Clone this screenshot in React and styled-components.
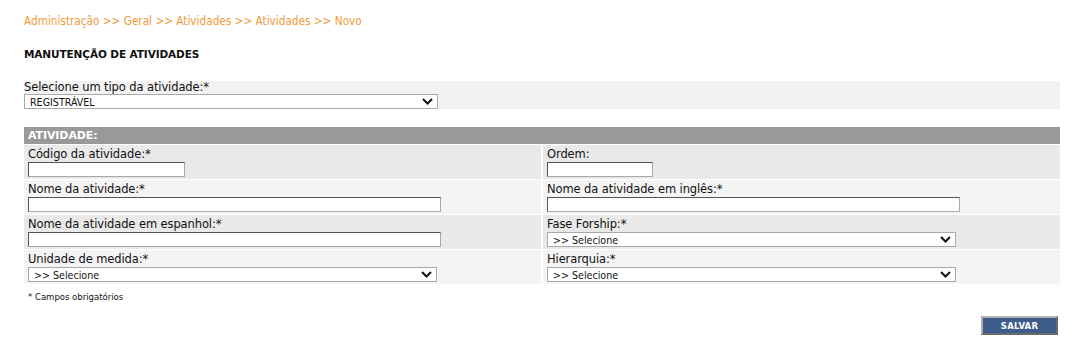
import React from "react";
import styled, { createGlobalStyle } from "styled-components";

const GlobalStyle = createGlobalStyle`
  html, body {
    margin: 0;
    padding: 0;
    background: #ffffff;
    font-family: "DejaVu Sans", Verdana, sans-serif;
    color: #111;
  }
`;

const Page = styled.div`
  width: 1080px;
  height: 348px;
  padding: 13px 20px 0 24px;
  box-sizing: border-box;
`;

const Breadcrumb = styled.div`
  color: #f39a3a;
  font-family: "DejaVu Sans Condensed", "DejaVu Sans", sans-serif;
  font-size: 11.7px;
  line-height: 17px;
`;

const Title = styled.h1`
  margin: 17px 0 0;
  font-size: 10.5px;
  line-height: 14px;
  font-weight: bold;
  letter-spacing: -0.1px;
`;

const TypeBlock = styled.div`
  margin-top: 20px;
  width: 1036px;
  background: #f2f2f2;
`;

const Label = styled.div`
  font-size: 11.5px;
  line-height: 13px;
  letter-spacing: -0.1px;
  color: #111;
`;

const Section = styled.div`
  margin-top: 18px;
  width: 1036px;
  background: #fff;
`;

const SectionHeader = styled.div`
  height: 17px;
  background: #999999;
  color: #fff;
  font-weight: bold;
  font-size: 11px;
  line-height: 17px;
  padding-left: 4px;
  letter-spacing: -0.1px;
`;

const Grid = styled.div`
  display: grid;
  grid-template-columns: 517px 1fr;
  column-gap: 2px;
  row-gap: 1px;
  padding-top: 1px;
`;

const Cell = styled.div`
  background: ${(p) => (p.$alt ? "#f4f4f4" : "#e9e9e9")};
  padding: 3px 4px 2px 4px;
  height: 34px;
  box-sizing: border-box;
  display: flex;
  flex-direction: column;
  gap: 1px;
`;

const TextInput = styled.div`
  width: ${(p) => p.$w}px;
  height: 15px;
  box-sizing: border-box;
  background: #fff;
  border: 1px solid #7a7a7a;
  border-top-color: #555;
  border-left-color: #555;
  border-bottom-color: #a8a8a8;
  border-right-color: #a8a8a8;
`;

const Select = styled.div`
  width: ${(p) => p.$w}px;
  height: 15px;
  box-sizing: border-box;
  background: #fff;
  border: 1px solid #a9a9a9;
  display: flex;
  align-items: center;
  justify-content: space-between;
  padding: 0 4px 0 5px;
  font-family: "DejaVu Sans Condensed", "DejaVu Sans", sans-serif;
  font-size: 10.6px;
  color: #111;
`;

const Chevron = () => (
  <svg width="11" height="7" viewBox="0 0 11 7">
    <path d="M1 1 L5.5 5.5 L10 1" fill="none" stroke="#111" strokeWidth="2" />
  </svg>
);

const Footnote = styled.div`
  margin-top: 7px;
  padding-left: 4px;
  font-size: 8.5px;
  line-height: 12px;
  color: #111;
`;

const Actions = styled.div`
  width: 1036px;
  display: flex;
  justify-content: flex-end;
  margin-top: 13px;
`;

const SaveButton = styled.button`
  width: 77px;
  height: 19px;
  margin-right: 2px;
  background: #3e5c8a;
  color: #fff;
  font-family: "DejaVu Sans", Verdana, sans-serif;
  font-weight: bold;
  font-size: 8.5px;
  letter-spacing: 0.2px;
  border: 2px solid #8c8c8c;
  border-top-color: #b0b0b0;
  border-left-color: #b0b0b0;
  border-bottom-color: #6a6a6a;
  border-right-color: #6a6a6a;
  padding: 0;
  cursor: pointer;
`;

function Field({ label, children, alt }) {
  return (
    <Cell $alt={alt}>
      <Label>{label}</Label>
      {children}
    </Cell>
  );
}

function Dropdown({ w, value }) {
  return (
    <Select $w={w}>
      <span>{value}</span>
      <Chevron />
    </Select>
  );
}

export default function App() {
  return (
    <>
      <GlobalStyle />
      <Page>
        <Breadcrumb>
          Administração &gt;&gt; Geral &gt;&gt; Atividades &gt;&gt; Atividades &gt;&gt; Novo
        </Breadcrumb>
        <Title>MANUTENÇÃO DE ATIVIDADES</Title>

        <TypeBlock>
          <Label>Selecione um tipo da atividade:*</Label>
          <Dropdown w={414} value="REGISTRÁVEL" />
        </TypeBlock>

        <Section>
          <SectionHeader>ATIVIDADE:</SectionHeader>
          <Grid>
            <Field label="Código da atividade:*">
              <TextInput $w={157} />
            </Field>
            <Field label="Ordem:">
              <TextInput $w={106} />
            </Field>
            <Field alt label="Nome da atividade:*">
              <TextInput $w={413} />
            </Field>
            <Field alt label="Nome da atividade em inglês:*">
              <TextInput $w={413} />
            </Field>
            <Field label="Nome da atividade em espanhol:*">
              <TextInput $w={413} />
            </Field>
            <Field label="Fase Forship:*">
              <Dropdown w={409} value=">> Selecione" />
            </Field>
            <Field alt label="Unidade de medida:*">
              <Dropdown w={409} value=">> Selecione" />
            </Field>
            <Field alt label="Hierarquia:*">
              <Dropdown w={409} value=">> Selecione" />
            </Field>
          </Grid>
        </Section>

        <Footnote>* Campos obrigatórios</Footnote>
        <Actions>
          <SaveButton>SALVAR</SaveButton>
        </Actions>
      </Page>
    </>
  );
}
